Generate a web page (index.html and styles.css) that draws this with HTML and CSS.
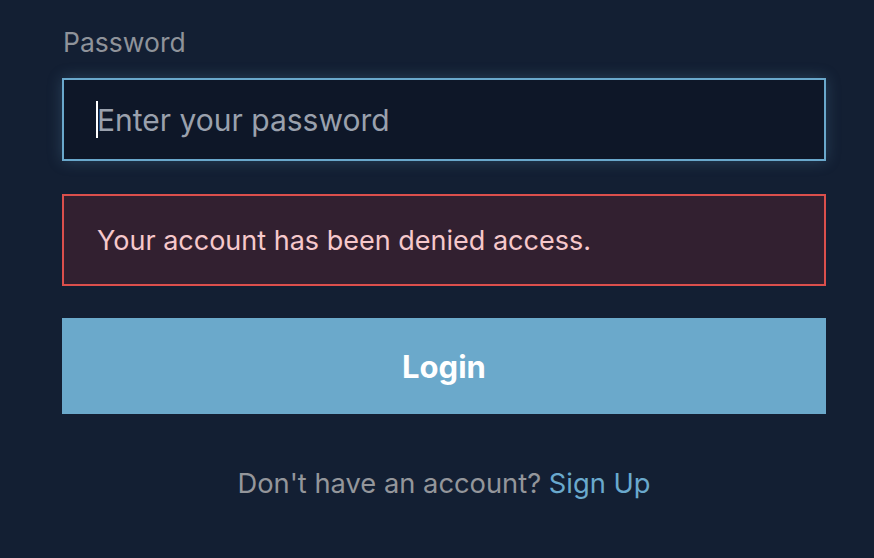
FILE: index.html
```html
<!DOCTYPE html>
<html>
<head>
<meta charset="utf-8">
<link rel="stylesheet" href="styles.css">
</head>
<body>
<div class="form">
  <label class="label" for="pw">Password</label>
  <div class="field">
    <input id="pw" class="input" type="password" placeholder="Enter your password">
    <span class="caret"></span>
  </div>
  <div class="error">Your account has been denied access.</div>
  <button class="btn" type="button">Login</button>
  <p class="footer">Don't have an account? <a class="link" href="#">Sign Up</a></p>
</div>
</body>
</html>
```
FILE: styles.css
```css
html, body {
  margin: 0;
  padding: 0;
  background: #131f33;
  height: 100%;
}
body {
  font-family: Inter, "Noto Sans", sans-serif;
}
.form {
  width: 764px;
  margin-left: 62px;
  padding-top: 25px;
  display: flex;
  flex-direction: column;
}
.label {
  color: #8f939a;
  font-size: 26.5px;
  line-height: 34px;
  margin-left: 1px;
}
.field {
  position: relative;
  margin-top: 19px;
}
.input {
  box-sizing: border-box;
  width: 100%;
  height: 83px;
  border: 2px solid #6aa8cc;
  background: #0e1728;
  box-shadow: 0 0 14px rgba(106, 168, 204, 0.25);
  padding: 0 0 0 33px;
  font-family: inherit;
  font-size: 30px;
  color: #e6e9ee;
  outline: none;
  caret-color: transparent;
  display: block;
}
.input::placeholder {
  color: #9aa1ad;
}
.caret {
  position: absolute;
  left: 34px;
  top: 23px;
  width: 2px;
  height: 37px;
  background: #ffffff;
}
.error {
  box-sizing: border-box;
  margin-top: 33px;
  height: 92px;
  border: 2px solid #db4f4c;
  background: #322030;
  color: #f6c8cb;
  font-size: 27px;
  display: flex;
  align-items: center;
  padding-left: 33px;
}
.btn {
  margin-top: 32px;
  height: 96px;
  border: none;
  background: #6ba9cb;
  color: #ffffff;
  font-family: inherit;
  font-size: 31px;
  font-weight: 700;
  cursor: pointer;
}
.footer {
  margin: 53px 0 0;
  text-align: center;
  color: #94969b;
  font-size: 27.3px;
  line-height: 34px;
}
.link {
  color: #6aa9cd;
  text-decoration: none;
}
```
